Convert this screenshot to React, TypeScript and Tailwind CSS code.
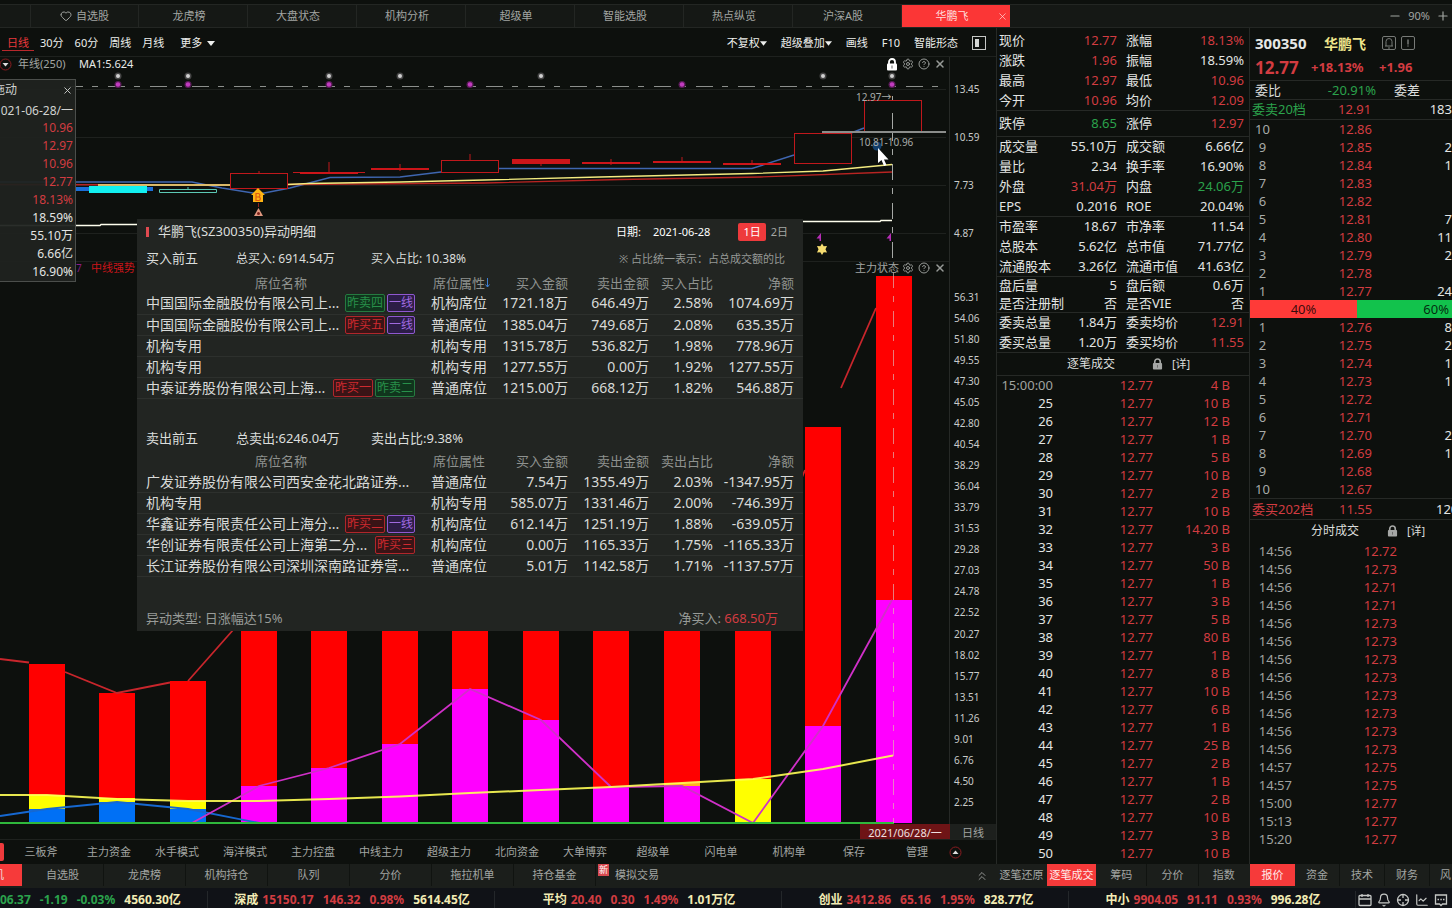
import React from "react";
import { Heart, X, Settings, CircleHelp, Minus, Plus, ChevronsUp, Calendar, Bell, ChartLine, MessageSquareMore } from "lucide-react";

const R = "text-[#d23c41]";
const G = "text-[#2ba24c]";
const W = "text-[#e3e5e3]";

const TOP_TABS = ["龙虎榜", "大盘状态", "机构分析", "超级单", "智能选股", "热点纵览", "沪深A股"];
const TEMPLATES = ["三板斧", "主力资金", "水手模式", "海洋模式", "主力控盘", "中线主力", "超级主力", "北向资金", "大单博弈", "超级单", "闪电单", "机构单"];
const LOWER_TABS = ["自选股", "龙虎榜", "机构持仓", "队列", "分价", "拖拉机单", "持仓基金"];
const PRICE_AXIS = ["13.45", "10.59", "7.73", "4.87"];
const FORCE_AXIS = ["56.31", "54.06", "51.80", "49.55", "47.30", "45.05", "42.80", "40.54", "38.29", "36.04", "33.79", "31.53", "29.28", "27.03", "24.78", "22.52", "20.27", "18.02", "15.77", "13.51", "11.26", "9.01", "6.76", "4.50", "2.25"];

type Quote = [string, string, string, string, string, string];
const QUOTES: { box: string; row: string; rows: Quote[] }[] = [
  { box: "pt-0.5", row: "h-5", rows: [
    ["现价", "12.77", R, "涨幅", "18.13%", R],
    ["涨跌", "1.96", R, "振幅", "18.59%", W],
    ["最高", "12.97", R, "最低", "10.96", R],
    ["今开", "10.96", R, "均价", "12.09", R],
  ] },
  { box: "", row: "h-[26px]", rows: [["跌停", "8.65", G, "涨停", "12.97", R]] },
  { box: "", row: "h-5", rows: [
    ["成交量", "55.10万", W, "成交额", "6.66亿", W],
    ["量比", "2.34", W, "换手率", "16.90%", W],
    ["外盘", "31.04万", R, "内盘", "24.06万", G],
    ["EPS", "0.2016", W, "ROE", "20.04%", W],
  ] },
  { box: "", row: "h-5", rows: [
    ["市盈率", "18.67", W, "市净率", "11.54", W],
    ["总股本", "5.62亿", W, "总市值", "71.77亿", W],
    ["流通股本", "3.26亿", W, "流通市值", "41.63亿", W],
  ] },
  { box: "", row: "h-[18px]", rows: [
    ["盘后量", "5", W, "盘后额", "0.6万", W],
    ["是否注册制", "否", W, "是否VIE", "否", W],
  ] },
  { box: "", row: "h-5", rows: [
    ["委卖总量", "1.84万", W, "委卖均价", "12.91", R],
    ["委买总量", "1.20万", W, "委买均价", "11.55", R],
  ] },
];

const TICKS: [string, string][] = [
  ["15:00:00", "4"], ["25", "10"], ["26", "12"], ["27", "1"], ["28", "5"], ["29", "10"], ["30", "2"], ["31", "10"], ["32", "14.20"],
  ["33", "3"], ["34", "50"], ["35", "1"], ["36", "3"], ["37", "5"], ["38", "80"], ["39", "1"], ["40", "8"], ["41", "10"],
  ["42", "6"], ["43", "1"], ["44", "25"], ["45", "2"], ["46", "1"], ["47", "2"], ["48", "10"], ["49", "3"], ["50", "10"],
];

const ASKS: [string, string, string][] = [
  ["10", "12.86", ""], ["9", "12.85", "2"], ["8", "12.84", "1"], ["7", "12.83", ""], ["6", "12.82", ""],
  ["5", "12.81", "7"], ["4", "12.80", "11"], ["3", "12.79", "2"], ["2", "12.78", ""], ["1", "12.77", "24"],
];
const BIDS: [string, string, string][] = [
  ["1", "12.76", "8"], ["2", "12.75", "2"], ["3", "12.74", "1"], ["4", "12.73", "1"], ["5", "12.72", ""],
  ["6", "12.71", ""], ["7", "12.70", "2"], ["8", "12.69", "1"], ["9", "12.68", ""], ["10", "12.67", ""],
];
const MINUTES: [string, string][] = [
  ["14:56", "12.72"], ["14:56", "12.73"], ["14:56", "12.71"], ["14:56", "12.71"], ["14:56", "12.73"], ["14:56", "12.73"],
  ["14:56", "12.73"], ["14:56", "12.73"], ["14:56", "12.73"], ["14:56", "12.73"], ["14:56", "12.73"], ["14:56", "12.73"],
  ["14:57", "12.75"], ["14:57", "12.75"], ["15:00", "12.77"], ["15:13", "12.77"], ["15:20", "12.77"],
];

type Tag = [string, "green" | "red" | "purple"];
type Seat = { name: string; tags: Tag[]; cells: string[] };
const BUYERS: Seat[] = [
  { name: "中国国际金融股份有限公司上...", tags: [["昨卖四", "green"], ["一线", "purple"]], cells: ["机构席位", "1721.18万", "646.49万", "2.58%", "1074.69万"] },
  { name: "中国国际金融股份有限公司上...", tags: [["昨买五", "red"], ["一线", "purple"]], cells: ["普通席位", "1385.04万", "749.68万", "2.08%", "635.35万"] },
  { name: "机构专用", tags: [], cells: ["机构专用", "1315.78万", "536.82万", "1.98%", "778.96万"] },
  { name: "机构专用", tags: [], cells: ["机构专用", "1277.55万", "0.00万", "1.92%", "1277.55万"] },
  { name: "中泰证券股份有限公司上海...", tags: [["昨买一", "red"], ["昨卖二", "green"]], cells: ["普通席位", "1215.00万", "668.12万", "1.82%", "546.88万"] },
];
const SELLERS: Seat[] = [
  { name: "广发证券股份有限公司西安金花北路证券...", tags: [], cells: ["普通席位", "7.54万", "1355.49万", "2.03%", "-1347.95万"] },
  { name: "机构专用", tags: [], cells: ["机构专用", "585.07万", "1331.46万", "2.00%", "-746.39万"] },
  { name: "华鑫证券有限责任公司上海分...", tags: [["昨买二", "red"], ["一线", "purple"]], cells: ["机构席位", "612.14万", "1251.19万", "1.88%", "-639.05万"] },
  { name: "华创证券有限责任公司上海第二分...", tags: [["昨买三", "red"]], cells: ["机构席位", "0.00万", "1165.33万", "1.75%", "-1165.33万"] },
  { name: "长江证券股份有限公司深圳深南路证券营...", tags: [], cells: ["普通席位", "5.01万", "1142.58万", "1.71%", "-1137.57万"] },
];
const TAG_STYLE = {
  green: "border-[#257a40] bg-[#10351d] text-[#28904a]",
  red: "border-[#b0262b] bg-[#3a1416] text-[#cf2a2f]",
  purple: "border-[#8f58d0] bg-[#2c1d47] text-[#a06ae0]",
};

const INDICES: [string, string, string, string, string, string][] = [
  ["深成", "15150.17", "146.32", "0.98%", "5614.45亿", R],
  ["平均", "20.40", "0.30", "1.49%", "1.01万亿", R],
  ["创业", "3412.86", "65.16", "1.95%", "828.77亿", R],
  ["中小", "9904.05", "91.11", "0.93%", "996.28亿", R],
];

function Caret({ className = "" }: { className?: string }) {
  return (
    <svg className={className} width="8" height="5" viewBox="0 0 8 5" fill="currentColor" aria-hidden="true">
      <path d="M0 0h8L4 5z" />
    </svg>
  );
}

function Padlock({ className = "" }: { className?: string }) {
  return (
    <svg className={className} viewBox="0 0 12 13" aria-hidden="true">
      <path d="M3 6V4a3 3 0 0 1 6 0v2" fill="none" stroke="currentColor" strokeWidth="1.8" />
      <rect x="1" y="5.5" width="10" height="7" rx="1" fill="currentColor" />
      <path d="M6 7.5v3" stroke="#666" strokeWidth="1" />
    </svg>
  );
}

function PanelTools() {
  return (
    <div className="flex items-center gap-1 text-[#979a97]">
      <button aria-label="设置"><Settings size={12} /></button>
      <button aria-label="帮助"><CircleHelp size={12} /></button>
      <button aria-label="关闭"><X size={12} strokeWidth={3} /></button>
    </div>
  );
}

function PriceChart() {
  const grey = [118, 188, 329, 400, 541, 823, 892];
  const pink = [118, 188, 329, 470, 682, 892];
  return (
    <svg className="block h-[204px] w-full" viewBox="0 57 949 204" preserveAspectRatio="none" aria-label="日线走势">
      <g stroke="#1e211e">
        <path d="M0 89.500H946M0 137.500H946M0 185.500H946M0 233.500H946" />
      </g>
      <path d="M66 86.500H946" stroke="#8c8f8c" strokeDasharray="17 9 6 10" />
      <path d="M892.500 96V260" stroke="#a5a8a5" strokeDasharray="16 8 6 9" strokeDashoffset="10" />
      <g fill="none" strokeWidth="1.4">
        <path d="M0 182H192L222 188L259 194L290 188L330 177.500L400 177L441 172L499 168.500H752L794 155L864 128" stroke="#3f66b0" />
        <path d="M0 184.500L230 185L287 184.500L420 183.500L484 183L620 179.500L760 177L892 172" stroke="#b82422" />
        <path d="M98 185H230L287 184.500L309 183.500L400 182L484 180L600 177L752 173.500L823 171L892 164.500" stroke="#f4ec80" />
        <path d="M0 225.500H100L101 224.500H137M803 221.500H880L881 220.500H892" stroke="#ffffee" />
      </g>
      <rect x="76" y="187" width="77" height="4" fill="#1a6fd8" />
      <rect x="89" y="186" width="58" height="7" fill="#12f0f0" />
      <path d="M159.500 189.500h57v3h-57zM188 187v2" fill="#0d100d" stroke="#5cc8b4" />
      <g stroke="#c0181c" fill="#0d100d">
        <rect x="230.500" y="173.500" width="57" height="15" />
        <path d="M259 171v2M293 172.500h72M329 162v11M400 164v7M470 154v6M541 160v6M611 159v6M682 157v6M752 160v5" />
        <rect x="441.500" y="160.500" width="57" height="12" />
        <rect x="794.500" y="133.500" width="57" height="30" />
        <rect x="864.500" y="100.500" width="57" height="31" />
      </g>
      <g fill="#cc1519">
        <rect x="300" y="172" width="58" height="2" />
        <rect x="371" y="168" width="58" height="2" />
        <rect x="512" y="159" width="58" height="5" />
        <rect x="582" y="162" width="58" height="2" />
        <rect x="653" y="161" width="58" height="2" />
        <rect x="723" y="163" width="58" height="2" />
      </g>
      <path d="M822 132H946" stroke="#8b8d8b" strokeWidth="2" />
      <path d="M892.500 113v16" stroke="#a5a8a5" />
      {grey.map((x) => (
        <g key={x}><circle cx={x} cy="76" r="3.500" fill="#444" /><circle cx={x} cy="76" r="2" fill="#d0d0d0" /></g>
      ))}
      {pink.map((x) => (
        <g key={x}><circle cx={x} cy="84.500" r="3.500" fill="#5a1c58" /><circle cx={x} cy="84.500" r="2.200" fill="#c23cc0" /></g>
      ))}
      <path d="M258 188l7 7h-2v7h-10v-7h-2z" fill="#ffb514" />
      <path d="M256 193.500h2.500a1.800 1.800 0 0 1 0 3.500h-2.500zM256 197h3a1.800 1.800 0 0 1 0 3.500h-3z" fill="none" stroke="#e05a10" strokeWidth="1.200" />
      <path d="M258.500 203v4" stroke="#8a2020" />
      <path d="M258.500 208l4.500 8h-9z" fill="#e09880" />
      <circle cx="258.500" cy="213.500" r="1.500" fill="#7a2018" />
      <path d="M821 233v8h-1.500v-2.500h-3zM891 233v8h-1.500v-2.500h-3z" fill="#b52db5" />
      <path d="M822 243.500l1.700 2.700 3.300-.2-1.500 3.200 1.500 3.200-3.300-.2-1.700 2.800-1.700-2.800-3.300.2 1.500-3.200-1.500-3.200 3.300.2z" fill="#f5dc70" />
      <circle cx="877" cy="146" r="4.500" fill="#123e6c" />
      <g fontSize="10" fill="#a9aca9">
        <text x="856" y="101">12.97→</text>
        <text x="859" y="146">10.81-10.96</text>
      </g>
      <path d="M878 148v15l3.500-3 2.500 6 2.500-1-2.500-5.500h4.500z" fill="#fff" />
    </svg>
  );
}

function ForceChart() {
  const red = [[29, 664], [99, 693], [170, 681], [241, 604], [311, 600], [382, 600], [452, 600], [523, 600], [593, 600], [664, 600], [735, 600], [805, 427], [876, 276]];
  const magenta = [[241, 786], [311, 768], [382, 744], [452, 689], [523, 720], [593, 787], [664, 786], [805, 726], [876, 600]];
  return (
    <svg className="block h-[563px] w-full" viewBox="0 261 949 563" preserveAspectRatio="none" aria-label="主力状态">
      <path d="M0 261.500H949" stroke="#1e211e" />
      {red.map(([x, y]) => <rect key={x} x={x} y={y} width="36" height={823 - y} fill="#ff0000" />)}
      {magenta.map(([x, y]) => <rect key={x} x={x} y={y} width="36" height={823 - y} fill="#ff00ff" />)}
      <g fill="#ffff00">
        <rect x="29" y="795" width="36" height="14" />
        <rect x="99" y="798" width="36" height="4" />
        <rect x="170" y="801" width="36" height="8" />
        <rect x="664" y="783" width="36" height="3" fill="#ffb020" />
        <rect x="735" y="779" width="36" height="44" />
      </g>
      <g fill="#0070f5">
        <rect x="29" y="809" width="36" height="14" />
        <rect x="99" y="802" width="36" height="21" />
        <rect x="170" y="809" width="36" height="14" />
      </g>
      <g fill="none" strokeWidth="1.800">
        <path d="M0 659L29 662.500M65 672L117 693L170 682.500M188 681L241 621M771 553L805 470M841 388L876 308" stroke="#c8262c" />
        <path d="M0 816L47 809L117 802L188 809L259 823" stroke="#1668d0" />
        <path d="M192 823L259 786L329 768L400 744L470 689L541 720L611 787L682 786L753 823L823 726L892 600" stroke="#d030c8" />
        <path d="M0 795H47L117 799L188 801H259L329 799L400 796.500L470 793L541 790L611 787L682 783L753 779L823 769L893 755.500" stroke="#ffff55" strokeWidth="2" opacity="0.9" />
      </g>
      <path d="M0 823H894" stroke="#2fb83c" strokeWidth="2" />
      <path d="M893.500 272V823" stroke="#e0b0b0" strokeDasharray="16 8 6 9" opacity="0.700" />
    </svg>
  );
}

function SeatTable({ share, sorted, seats }: { share: string; sorted?: boolean; seats: Seat[] }) {
  return (
    <table className="w-full table-fixed border-collapse text-[14px] text-[#d8dad8]">
      <colgroup>
        <col className="w-[294px]" /><col className="w-[60px]" /><col className="w-[77px]" />
        <col className="w-[81px]" /><col className="w-[64px]" /><col className="w-[90px]" />
      </colgroup>
      <thead>
        <tr className="h-5 whitespace-nowrap text-[13px] leading-[19px] text-[#8f928f]">
          <th className="p-0 pr-1.5 text-center font-normal">席位名称</th>
          <th className="p-0 text-left font-normal">
            <span className="flex items-center pl-0.5">
              席位属性
              {sorted && (
                <svg className="shrink-0" width="5" height="10" viewBox="0 0 5 10" fill="none" stroke="#3f7fd0" aria-label="降序">
                  <path d="M2.500 0v9M0.500 6.500l2 2.500 2-2.500" />
                </svg>
              )}
            </span>
          </th>
          <th className="p-0 text-right font-normal">买入金额</th>
          <th className="p-0 text-right font-normal">卖出金额</th>
          <th className="p-0 text-right font-normal">{share}</th>
          <th className="p-0 pr-[9px] text-right font-normal">净额</th>
        </tr>
      </thead>
      <tbody>
        {seats.map((s, i) => (
          <tr key={i} className="h-[21px] whitespace-nowrap border-b border-[#2d302d] leading-5">
            <td className="p-0 pr-4 pl-[9px]">
              <div className="flex h-5 items-center justify-between">
                <span>{s.name}</span>
                <span className="flex gap-0.5">
                  {s.tags.map(([t, k]) => (
                    <span key={t} className={`rounded-[2px] border px-px text-[12px] leading-4 ${TAG_STYLE[k]}`}>{t}</span>
                  ))}
                </span>
              </div>
            </td>
            <td className="p-0 text-left">{s.cells[0]}</td>
            <td className="p-0 text-right">{s.cells[1]}</td>
            <td className="p-0 text-right">{s.cells[2]}</td>
            <td className="p-0 text-right">{s.cells[3]}</td>
            <td className="p-0 pr-[9px] text-right">{s.cells[4]}</td>
          </tr>
        ))}
      </tbody>
    </table>
  );
}

function DetailPopup() {
  return (
    <section className="absolute top-[191px] left-[137px] w-[666px] bg-[#222522] text-[#dcdedc]">
      <header className="flex h-[26px] items-center pr-[15px] pl-[9px] text-[13px]">
        <span className="mr-[9px] h-[10px] w-[3px] bg-[#e04a50]" />
        <h2 className="flex-1">华鹏飞(SZ300350)异动明细</h2>
        <span className="mr-3 text-[11px] text-white">日期:</span>
        <span className="mr-7 text-[11px] text-white">2021-06-28</span>
        <button className="mr-[5px] rounded-[2px] bg-[#ee3a3c] px-[5px] text-[11px] leading-[18px] text-white">1日</button>
        <button className="text-[11px] text-[#a5a8a5]">2日</button>
      </header>
      <div className="flex h-7 items-center pr-[18px] pl-[9px]">
        <h3 className="w-[90px] text-[13px]">买入前五</h3>
        <span className="w-[135px] text-[12px]">总买入: 6914.54万</span>
        <span className="flex-1 text-[12px]">买入占比: 10.38%</span>
        <span className="text-[11px] text-[#969996]">※ 占比统一表示：占总成交额的比</span>
      </div>
      <SeatTable share="买入占比" sorted seats={BUYERS} />
      <div className="mt-[27px] flex h-[26px] items-center pl-[9px] text-[13px]">
        <h3 className="w-[90px]">卖出前五</h3>
        <span className="w-[135px]">总卖出:6246.04万</span>
        <span>卖出占比:9.38%</span>
      </div>
      <SeatTable share="卖出占比" seats={SELLERS} />
      <footer className="mt-[30px] flex h-6 items-center justify-between pr-[25px] pl-[9px] text-[13px] text-[#989b98]">
        <span>异动类型: 日涨幅达15%</span>
        <span>净买入: <span className={R}>668.50万</span></span>
      </footer>
    </section>
  );
}

function DayCard() {
  const rows: [string, string][] = [
    ["10.96", R], ["12.97", R], ["10.96", R], ["12.77", R], ["18.13%", R], ["18.59%", W], ["55.10万", W], ["6.66亿", W], ["16.90%", W],
  ];
  return (
    <aside className="absolute top-[51px] left-0 w-[76px] overflow-hidden border border-l-0 border-[#4b4e4b] bg-[#202320]/95 pr-0.5 text-right text-[12px]">
      <div className="flex h-5 items-center justify-between text-[#d0d2d0]">
        <div className="flex w-[17px] justify-end overflow-hidden"><span className="shrink-0">拖动</span></div>
        <button aria-label="关闭"><X size={11} /></button>
      </div>
      <div className="h-[19px] leading-[21px] text-[#d0d2d0]">021-06-28/一</div>
      {rows.map(([v, c], i) => <div key={i} className={`h-[18px] leading-[18px] ${c}`}>{v}</div>)}
    </aside>
  );
}

function QuotePanel() {
  return (
    <section className="w-[253px] shrink-0 border-l border-[#262926] text-[13px]">
      {QUOTES.map((g, i) => (
        <dl key={i} className={`border-b border-[#262926] ${g.box} -mb-px`}>
          {g.rows.map(([a, av, ac, b, bv, bc]) => (
            <div key={a} className={`grid grid-cols-[118px_118px] items-center gap-x-[9px] pl-0.5 leading-[18px] whitespace-nowrap ${g.row}`}>
              <div className="flex justify-between"><dt className={W}>{a}</dt><dd className={ac}>{av}</dd></div>
              <div className="flex justify-between"><dt className={W}>{b}</dt><dd className={bc}>{bv}</dd></div>
            </div>
          ))}
        </dl>
      ))}
      <header className="mt-px flex h-[23px] items-center border-b border-[#262926] pl-[70px] text-[12px] text-[#dcdedc]">
        <h3 className="w-[85px]">逐笔成交</h3>
        <Padlock className="mr-[9px] h-3 w-[11px] text-[#a5a7a5]" />
        <a href="#ticks" className="text-[11px]">[详]</a>
      </header>
      <table id="ticks" className="table-fixed border-collapse">
        <tbody>
          {TICKS.map(([t, v], i) => (
            <tr key={i} className={`h-[18px] leading-[18px] ${R}`}>
              <td className={`w-[56px] p-0 text-right ${i === 0 ? "text-[#a0a3a0]" : W}`}>{t}</td>
              <td className="w-[100px] p-0 text-right">12.77</td>
              <td className="w-[77px] p-0 text-right">{v} B</td>
            </tr>
          ))}
        </tbody>
      </table>
    </section>
  );
}

function Levels({ rows }: { rows: [string, string, string][] }) {
  return (
    <table className="w-full table-fixed border-collapse">
      <tbody>
        {rows.map(([n, p, q]) => (
          <tr key={n} className="h-[18px] leading-[18px]">
            <td className="w-[25px] p-0 text-center text-[#a8aba8]">{n}</td>
            <td className={`w-[97px] p-0 text-right ${R}`}>{p}</td>
            <td className={`p-0 text-right ${W}`}>{q}</td>
          </tr>
        ))}
      </tbody>
    </table>
  );
}

function BookPanel() {
  return (
    <section className="w-[203px] shrink-0 overflow-hidden border-l border-[#262926] text-[13px] whitespace-nowrap">
      <header className="flex h-[28px] items-center pt-0.5 pl-[5px] font-bold">
        <span className="w-[69px] text-[15px] text-[#e6e8e6]">300350</span>
        <h2 className="w-[58px] text-[14px] text-[#f0e68c]">华鹏飞</h2>
        <svg width="34" height="14" viewBox="0 0 34 14" fill="none" stroke="#777a77" aria-hidden="true">
          <rect x="0.500" y="0.500" width="13" height="13" rx="1.500" />
          <path d="M4 10V5.500a3 3 0 0 1 6 0V10M3 10h8M6 12h2" />
          <rect x="19.500" y="0.500" width="13" height="13" rx="1.500" />
          <path d="M26 3.500v5M26 9.500v1" strokeWidth="1.500" />
        </svg>
      </header>
      <div className={`flex h-[25px] items-center border-b border-[#262926] pl-[5px] font-bold ${R}`}>
        <span className="w-[56px] text-[17px]">12.77</span>
        <span className="w-[68px] text-[13px]">+18.13%</span>
        <span className="text-[13px]">+1.96</span>
      </div>
      <div className="flex h-[19px] items-center border-b border-[#262926] pt-px pl-[5px] text-[#dcdedc]">
        <span>委比</span>
        <span className={`w-[95px] text-right ${G}`}>-20.91%</span>
        <span className="ml-[18px]">委差</span>
      </div>
      <div className="flex h-5 items-center justify-between border-b border-[#262926] pl-0.5">
        <span className={`w-[86px] ${G}`}>委卖20档</span>
        <span className={R}>12.91</span>
        <span className={`flex-1 text-right ${W}`}>183</span>
      </div>
      <Levels rows={ASKS} />
      <div className="flex h-[18px] leading-[19px] text-black/80">
        <span className="w-[107px] shrink-0 bg-[#ff3a38] text-center">40%</span>
        <span className="flex-1 bg-[#12c24c] pr-[3px] text-right">60%</span>
      </div>
      <Levels rows={BIDS} />
      <div className="flex h-[22px] items-center border-y border-[#262926] pt-0.5 pl-0.5">
        <span className={`w-[87px] shrink-0 ${R}`}>委买202档</span>
        <span className={`w-[97px] shrink-0 ${R}`}>11.55</span>
        <span className={W}>120</span>
      </div>
      <header className="flex h-[22px] items-center pl-[61px] text-[12px] text-[#dcdedc]">
        <h3 className="w-[76px]">分时成交</h3>
        <Padlock className="mr-[9px] h-3 w-[11px] text-[#a5a7a5]" />
        <a href="#minutes" className="text-[11px]">[详]</a>
      </header>
      <table id="minutes" className="table-fixed border-collapse">
        <tbody>
          {MINUTES.map(([t, p], i) => (
            <tr key={i} className="h-[18px] leading-[18px]">
              <td className="w-[42px] p-0 text-right text-[#a0a3a0]">{t}</td>
              <td className={`w-[105px] p-0 text-right ${R}`}>{p}</td>
            </tr>
          ))}
        </tbody>
      </table>
    </section>
  );
}

function ChartToolbar() {
  return (
    <div className="flex h-[29px] items-center border-b border-[#1e211e] pt-0.5 text-[11px] text-[#eceeec]">
      <button className="mr-[6px] ml-0.5 w-8 border-b border-[#b8282c] leading-[15px] text-[#e8383c]">日线</button>
      <div className="flex items-center gap-[11px]">
        <button>30分</button><button>60分</button><button>周线</button><button>月线</button>
      </div>
      <button className="ml-4 flex items-center gap-[5px]">更多<Caret /></button>
      <div className="ml-auto flex items-center gap-[14px] pr-[10px]">
        <button className="flex items-center">不复权<Caret className="w-[7px]" /></button>
        <button className="flex items-center">超级叠加<Caret className="w-[7px]" /></button>
        <button>画线</button>
        <button>F10</button>
        <button>智能形态</button>
        <button aria-label="侧栏">
          <svg width="14" height="14" viewBox="0 0 14 14" aria-hidden="true">
            <rect x="0.500" y="0.500" width="13" height="13" fill="none" stroke="#c5c7c5" />
            <rect x="3" y="3" width="4" height="8" fill="#d5d7d5" />
          </svg>
        </button>
      </div>
    </div>
  );
}

function Charts() {
  return (
    <section className="min-w-0 flex-1">
      <ChartToolbar />
      <div className="flex">
        <div className="relative min-w-0 flex-1 border-r border-[#262926]">
          <div className="absolute inset-x-0 top-0 flex h-[14px] items-center pr-[3px] text-[11px]">
            <svg className="-ml-px mr-[6px]" width="13" height="13" viewBox="0 0 13 13" aria-hidden="true">
              <circle cx="6.500" cy="6.500" r="5.500" fill="none" stroke="#8a1c20" />
              <path d="M3.500 5h6l-3 3.500z" fill="#ddd" />
            </svg>
            <span className="w-[61px] text-[#a2a5a2]">年线(250)</span>
            <span className="flex-1 text-[#e8eae8]">MA1:5.624</span>
            <Padlock className="mr-1 h-[13px] w-3 text-white" />
            <PanelTools />
          </div>
          <PriceChart />
        </div>
        <div className="w-[46px] pt-2 pl-1 text-[10px] text-[#c9cbc9]">
          {PRICE_AXIS.map((v) => <div key={v} className="h-12 leading-[48px]">{v}</div>)}
        </div>
      </div>
      <div className="flex">
        <div className="relative min-w-0 flex-1 border-r border-[#262926]">
          <ForceChart />
          <div className="absolute inset-x-0 top-0 flex h-[14px] items-center pr-[3px] pl-[76px] text-[11px]">
            <span className="w-[15px] text-[10px] text-[#8a1c88]">7</span>
            <span className="text-[#c8151a]">中线强势</span>
            <span className="mr-[3px] ml-auto text-[#a2a5a2]">主力状态</span>
            <PanelTools />
          </div>
        </div>
        <div className="flex w-[46px] flex-col justify-between pt-[29px] pb-[15px] pl-1 text-[10px] leading-[14px] text-[#c9cbc9]">
          {FORCE_AXIS.map((v) => <div key={v}>{v}</div>)}
        </div>
      </div>
      <div className="flex h-4 justify-end border-b border-[#1e211e] text-[11px] leading-[17px]">
        <span className="w-[90px] bg-[#6e1416] text-center text-[11px] text-[#f0e0e0]">2021/06/28/一</span>
        <span className="w-[46px] bg-[#1d201d] text-center text-[#a2a5a2]">日线</span>
      </div>
      <nav className="flex h-6 items-center text-[11px] text-[#a2a5a2]">
        <span className="mr-[3px] h-[18px] w-1 rounded-r-[2px] bg-[#ee3a3c]" />
        {TEMPLATES.map((t) => <button key={t} className="w-[68px]">{t}</button>)}
        <button className="w-[62px]">保存</button>
        <button className="w-16">管理</button>
        <button aria-label="展开">
          <svg width="13" height="13" viewBox="0 0 13 13" aria-hidden="true">
            <circle cx="6.500" cy="6.500" r="5.500" fill="none" stroke="#8a1c20" />
            <path d="M3.500 8h6l-3-3.500z" fill="#ddd" />
          </svg>
        </button>
      </nav>
    </section>
  );
}

function LowerTabs() {
  return (
    <nav className="flex h-6 shrink-0 bg-[#1b1e1b] text-[11px] leading-[22px] whitespace-nowrap text-[#a2a5a2]">
      <div className="flex min-w-0 flex-1 items-start">
        <button className="flex h-[22px] w-[22px] shrink-0 justify-end overflow-hidden bg-[#f63a3a] pr-[18px] text-[#f0dada]"><span className="shrink-0">手机</span></button>
        {LOWER_TABS.map((t) => <button key={t} className="w-[82px] shrink-0 border-r border-[#101310]">{t}</button>)}
        <button className="relative ml-[14px]">
          <span className="px-[5px]">模拟交易</span>
          <span className="absolute top-0 -left-3 bg-[#d84a50] px-px text-[9px] leading-[12px] text-white">新</span>
        </button>
        <button aria-label="展开" className="mr-[7px] ml-auto self-center"><ChevronsUp size={14} strokeWidth={1.5} /></button>
      </div>
      <div className="flex w-[253px] items-start">
        <button className="w-[51px]">逐笔还原</button>
        <button className="w-[49px] bg-[#f63a3a] text-[#ffe8e8]">逐笔成交</button>
        <button className="flex-1 border-r border-[#101310]">筹码</button>
        <button className="flex-1 border-r border-[#101310]">分价</button>
        <button className="flex-1">指数</button>
      </div>
      <div className="flex w-[203px] items-start overflow-hidden">
        <button className="ml-px w-[45px] shrink-0 bg-[#f63a3a] text-[#ffe8e8]">报价</button>
        <button className="w-[45px] shrink-0 border-r border-[#101310]">资金</button>
        <button className="w-[45px] shrink-0 border-r border-[#101310]">技术</button>
        <button className="w-[45px] shrink-0 border-r border-[#101310]">财务</button>
        <button className="ml-[10px] shrink-0">风</button>
      </div>
    </nav>
  );
}

function StatusBar() {
  return (
    <footer className="flex h-5 shrink-0 items-center overflow-hidden bg-[#101217] pt-[3px] text-[12px] leading-[17px] font-bold whitespace-nowrap">
      <div className={`flex w-[208px] shrink-0 gap-[9px] border-r border-[#24272a] ${G}`}>
        <span>06.37</span><span>-1.19</span><span>-0.03%</span><span className="text-[#f3ecb4]">4560.30亿</span>
      </div>
      {INDICES.map(([n, a, b, c, d, col]) => (
        <div key={n} className="flex w-[287px] shrink-0 justify-center gap-[9px] border-r border-[#24272a] pl-0.5 last-of-type:border-r-0">
          <span className={col}><span className="mr-1 text-[#f3ecb4]">{n}</span>{a}</span>
          <span className={col}>{b}</span><span className={col}>{c}</span><span className="text-[#f3ecb4]">{d}</span>
        </div>
      ))}
      <div className="ml-auto flex items-center gap-[5px] pr-1 text-[#c5c7c5]">
        <button aria-label="日历">
          <svg width="14" height="14" viewBox="0 0 14 14" fill="none" stroke="currentColor" strokeWidth="1.300" aria-hidden="true">
            <rect x="1" y="2.500" width="12" height="10" rx="1" /><path d="M1 6h12M4 1v3M10 1v3" />
          </svg>
        </button>
        <button aria-label="提醒"><Bell size={14} /></button>
        <button aria-label="定位">
          <svg width="14" height="14" viewBox="0 0 14 14" fill="none" stroke="currentColor" strokeWidth="1.300" aria-hidden="true">
            <circle cx="7" cy="7" r="5.500" /><path d="M7 1v4M7 9v4M1 7h4M9 7h4" />
          </svg>
        </button>
        <button aria-label="图表"><ChartLine size={14} /></button>
        <button aria-label="消息">
          <svg width="14" height="14" viewBox="0 0 14 14" fill="none" stroke="currentColor" strokeWidth="1.300" aria-hidden="true">
            <path d="M1.500 2h11v9h-4l-1.500 1.500L5.500 11h-4z" /><path d="M3.500 6.500h1.500M6.300 6.500h1.500M9 6.500h1.500" />
          </svg>
        </button>
      </div>
    </footer>
  );
}

export default function App() {
  return (
    <div className="flex min-h-screen flex-col overflow-hidden bg-[#0d100d] font-['Noto_Sans','Noto_Sans_CJK_SC',sans-serif]">
      <header className="mt-1 flex h-6 shrink-0 items-stretch border-y border-[#232623] bg-[#151815] text-[11px] text-[#a2a5a2]">
        <nav className="flex pl-[30px]">
          <button className="flex w-[109px] items-center justify-center gap-1 border-x border-[#232623]"><Heart size={12} />自选股</button>
          {TOP_TABS.map((t) => <button key={t} className="w-[109px] border-r border-[#232623] pr-2">{t}</button>)}
          <div className="flex w-[108px] items-center bg-[#fb3636] text-[#ffdede]">
            <button className="flex-1 pl-[5px]">华鹏飞</button>
            <button aria-label="关闭" className="pr-0.5"><X size={11} strokeWidth={1.5} /></button>
          </div>
        </nav>
        <div className="ml-auto flex items-center gap-[6px] pr-[2px]">
          <button aria-label="缩小"><Minus size={14} /></button>
          <span className="text-[11px]">90%</span>
          <button aria-label="放大"><Plus size={14} /></button>
        </div>
      </header>
      <main className="relative flex flex-1">
        <Charts />
        <QuotePanel />
        <BookPanel />
        <DayCard />
        <DetailPopup />
      </main>
      <LowerTabs />
      <StatusBar />
    </div>
  );
}
